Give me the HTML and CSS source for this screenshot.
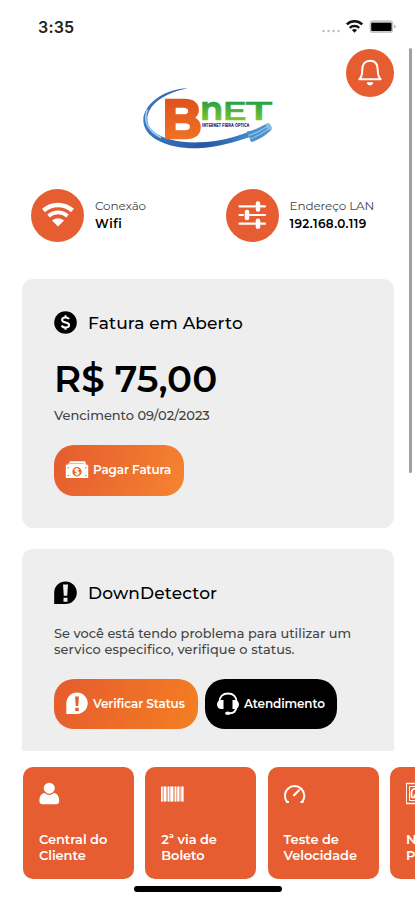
FILE: index.html
```html
<!DOCTYPE html>
<html lang="pt-BR">
<head>
<meta charset="utf-8">
<title>Bnet</title>
<link rel="stylesheet" href="styles.css">
</head>
<body>
<div class="app">
  <header class="status">
    <span class="time">3:35</span>
    <svg class="status-icons" width="76" height="16" viewBox="0 0 76 16">
      <g fill="#bbb"><circle cx="2.500" cy="12" r="1.200"/><circle cx="7.500" cy="12" r="1.200"/><circle cx="12.500" cy="12" r="1.200"/><circle cx="17.500" cy="12" r="1.200"/></g>
      <g fill="none" stroke="#111" stroke-width="2.500"><path d="M25.800 5.400a11.300 11.300 0 0 1 15.400 0"/><path d="M28.800 8.900a7 7 0 0 1 9.400 0"/></g>
      <path d="M33.500 13.800l-2.600-2.700a3.800 3.800 0 0 1 5.200 0z" fill="#111"/>
      <rect x="48.600" y="1.300" width="23.600" height="12.800" rx="3.200" fill="#c8c8c8"/>
      <rect x="50.200" y="3.700" width="20.300" height="8.200" rx="1" fill="#000"/>
      <path d="M73.200 5.500q3 2 0 4z" fill="#aaa"/>
    </svg>
  </header>

  <main class="content">
    <div class="brand">
      <svg class="logo" width="150" height="75" viewBox="0 0 450 225">
        <defs>
          <linearGradient id="orange" x2="0" y2="1"><stop stop-color="#d8481e"/><stop offset="1" stop-color="#f57b22"/></linearGradient>
          <linearGradient id="green" gradientUnits="userSpaceOnUse" x1="0" y1="64" x2="0" y2="122"><stop stop-color="#249f49"/><stop offset="1" stop-color="#80c52c"/></linearGradient>
          <linearGradient id="blue"><stop stop-color="#3a78bf"/><stop offset=".6" stop-color="#2558a6"/><stop offset="1" stop-color="#4387cb"/></linearGradient>
        </defs>
        <path d="M158 25C82 28 25 75 25 121c0 52 70 86 163 84 65-2 112-20 154-33l-3-16c-40 16-89 29-145 31C103 190 37 162 37 118c0-43 52-80 121-93z" fill="url(#blue)"/>
        <path d="M37 88c-13 34 1 66 42 85" fill="none" stroke="#a4c9ed" stroke-width="5"/>
        <path d="M336 154c26-3 43-16 63-24q13 6 10 20c-17 15-37 31-61 36z" fill="#4c8fcb"/>
        <path d="M342 166c25-5 40-20 60-29M346 176c25-7 40-22 59-31" fill="none" stroke="#8dbfe6" stroke-width="4"/>
        <ellipse cx="401" cy="140" rx="7" ry="11" transform="rotate(-25 401 140)" fill="#86bce3"/>
        <text class="logo-b" x="80" y="173" textLength="120" lengthAdjust="spacingAndGlyphs" fill="url(#orange)" stroke="url(#orange)">B</text>
        <text class="logo-n" x="195" y="121" textLength="70" lengthAdjust="spacingAndGlyphs" fill="url(#green)" stroke="url(#green)">n</text>
        <text class="logo-et" x="262" y="121" textLength="74" lengthAdjust="spacingAndGlyphs" fill="url(#green)" stroke="url(#green)">E</text>
        <text class="logo-et" x="332" y="121" textLength="79" lengthAdjust="spacingAndGlyphs" fill="url(#green)" stroke="url(#green)">T</text>
        <text class="logo-tag" x="201" y="140" textLength="142" lengthAdjust="spacingAndGlyphs">INTERNET FIBRA OPTICA</text>
      </svg>
      <div class="bell">
        <svg width="30" height="30" viewBox="0 0 30 30" fill="none" stroke="#fff" stroke-width="2" stroke-linejoin="round" stroke-linecap="round">
          <path d="M4.300 21.200c2.300-2 3-4.600 3-9.600C7.300 6 10 2.800 15 2.800s7.700 3.200 7.700 8.800c0 5 .7 7.600 3 9.600z"/>
          <path d="M12.800 25.200q2.200 2.500 4.400 0z" fill="#fff"/>
        </svg>
      </div>
    </div>

    <section class="network">
      <div class="info">
        <div class="disc">
          <svg width="34" height="26" viewBox="0 0 34 26" fill="none" stroke="#fff">
            <path d="M2.500 8.500a22 22 0 0 1 29 0" stroke-width="4.500"/>
            <path d="M7.500 14a14.500 14.500 0 0 1 19 0" stroke-width="3.700"/>
            <path d="M17 24.500l-6-6q6-4.500 12 0z" fill="#fff" stroke="none"/>
          </svg>
        </div>
        <div class="info-text"><div class="label">Conexão</div><div class="value t-wifi">Wifi</div></div>
      </div>
      <div class="info">
        <div class="disc">
          <svg width="28" height="28" viewBox="0 0 28 28" fill="none" stroke="#fff" stroke-linecap="round">
            <path d="M1.500 5.300H17M23 5.300h4M1.500 14H5M12 14h15M1.500 22.700H17M23 22.700h4" stroke-width="2.200"/>
            <path d="M20 2.500v6M9 11v6M20 19.700v6" stroke-width="4.600"/>
          </svg>
        </div>
        <div class="info-text"><div class="label">Endereço LAN</div><div class="value t-ip">192.168.0.119</div></div>
      </div>
    </section>

    <section class="card invoice">
      <div class="card-title">
        <svg width="24" height="24" viewBox="0 0 24 24"><circle cx="11.500" cy="11.500" r="11.300"/><path d="M15 8.100C14.300 6.800 13.100 6.500 11.500 6.500c-2 0-3.400.8-3.400 2.400 0 3.500 7 1.500 7 5.100 0 1.700-1.500 2.500-3.600 2.500-1.800 0-3.200-.6-3.800-2M11.500 4.200V6.500M11.500 16.500v2.300" fill="none" stroke="#fff" stroke-width="2"/></svg>
        <h2>Fatura em Aberto</h2>
      </div>
      <div class="amount">R$ 75,00</div>
      <div class="due">Vencimento 09/02/2023</div>
      <div class="actions">
        <div class="btn pay">
          <svg width="24" height="18" viewBox="0 0 24 18">
            <path d="M4.500 1.200h15v3M2.800 3.400h18.400" fill="none" stroke="#fff" stroke-width="1.700"/>
            <rect x=".8" y="3.800" width="22.400" height="13.200" fill="#fff"/>
            <circle cx="12" cy="10.800" r="4.700" fill="#eb6a2b"/>
            <path d="M14 8.800q-4-1.500-4 .5c0 1.800 4 .9 4 2.800q0 2-4 .5M12 7v7.600" fill="none" stroke="#fff" stroke-width="1.200"/>
            <path d="M2.500 6.800h1.500M20 6.800h1.500M2.500 14.500h1.500M20 14.500h1.500" stroke="#eb6a2b" stroke-width="1"/>
          </svg>
          <span>Pagar Fatura</span>
        </div>
      </div>
    </section>

    <section class="card detector">
      <div class="card-title">
        <svg width="24" height="24" viewBox="0 0 24 24"><path d="M.2 23V11.500A11.300 11.300 0 1 1 11.500 23z"/><path d="M9 3.500h5l-.8 11.200H9.800zM9.500 16.700h4v4h-4z" fill="#eee"/></svg>
        <h2>DownDetector</h2>
      </div>
      <p class="desc"><span class="d1">Se você está tendo problema para utilizar um</span><br><span class="d2">servico especifico, verifique o status.</span></p>
      <div class="actions">
        <div class="btn check">
          <svg width="24" height="24" viewBox="0 0 24 24"><path d="M1.300 22V11.300A10.700 10.700 0 1 1 12 22z" fill="#fff"/><path d="M10.100 4.500h3.800l-.7 9.500h-2.400zM10.300 15.700h3.400v3.400h-3.400z" fill="#e75b2d"/></svg>
          <span>Verificar Status</span>
        </div>
        <div class="btn support">
          <svg width="24" height="24" viewBox="0 0 24 24" fill="none" stroke="#fff">
            <path d="M3.500 10C3.500 4.500 7 1.500 12 1.500s8.500 3 8.500 8.500M20.500 15.500c-.7 3.500-2.800 5.600-6.500 5.800" stroke-width="1.900"/>
            <path d="M7.500 8v9H5.600C2.700 17 1 15.100 1 12.500s1.700-4.500 4.600-4.500zM16.500 8v9h1.900c2.900 0 4.600-1.900 4.600-4.500s-1.700-4.500-4.600-4.500z" fill="#fff" stroke="none"/>
            <ellipse cx="11.800" cy="21.300" rx="2.700" ry="1.700" fill="#fff" stroke="none"/>
          </svg>
          <span>Atendimento</span>
        </div>
      </div>
    </section>
  </main>

  <nav class="shortcuts">
    <div class="tile">
      <svg width="24" height="24" viewBox="0 0 24 24" fill="#fff"><circle cx="10.300" cy="6.200" r="5.500"/><path d="M5.600 11q4.700 4.100 9.400 0c3.300.4 5.200 3.400 5.200 8 0 2.100-1.200 3.200-3 3.200H3.400c-1.800 0-3-1.100-3-3.200 0-4.600 1.900-7.600 5.200-8z"/></svg>
      <div><span>Central do</span><br><span>Cliente</span></div>
    </div>
    <div class="tile">
      <svg width="24" height="24" viewBox="0 0 24 24" fill="#fff"><rect x="0" y="4.500" width="22.500" height="15" opacity=".5"/><path d="M0 4.500h1.500v15H0zM3 4.500h2v15H3zM7 4.500h1v15H7zM9.500 4.500H12v15H9.500zM14 4.500h1v15h-1zM16.500 4.500H18v15h-1.500zM20.500 4.500h2v15h-2z"/></svg>
      <div><span>2ª via de</span><br><span>Boleto</span></div>
    </div>
    <div class="tile">
      <svg width="24" height="24" viewBox="0 0 24 24" fill="none" stroke="#fff" stroke-width="2"><path d="M3.200 20a9.700 9.700 0 1 1 14.800 0"/><path d="M10 13.200L15 8.200" stroke-width="2.200" stroke-linecap="round"/><path d="M2 20h3M16.500 20h3"/></svg>
      <div><span>Teste de</span><br><span>Velocidade</span></div>
    </div>
    <div class="tile">
      <svg width="24" height="24" viewBox="0 0 24 24" fill="none" stroke="#fff" stroke-width="1.400"><rect x=".2" y="1.500" width="21" height="20"/><path d="M3.500 4.500h15v14h-15z" stroke-width="1"/><path d="M5.500 15.500v-5a4 4 0 0 1 8 0v5M5.500 15.500h3v-3" stroke-width="1.700"/></svg>
      <div><span>N</span><br><span>P</span></div>
    </div>
  </nav>
  <div class="home-bar"></div>
  <div class="scrollbar"></div>
</div>
</body>
</html>
```
FILE: styles.css
```css
* { box-sizing: border-box; }
body { margin: 0; background: #fff; color: #000; font-family: Montserrat, Inter, "Liberation Sans", sans-serif; }
.app { position: relative; width: 415px; height: 900px; overflow: hidden; display: flex; flex-direction: column; }
.status { height: 48px; flex: none; display: flex; justify-content: space-between; align-items: flex-start; padding: 19px 18px 0 38px; }
.time { font-family: Inter, sans-serif; font-size: 16px; line-height: 17px; font-weight: 600; color: #222; letter-spacing: .2px; }
.content { height: 703px; flex: none; overflow: hidden; padding: 0 21px 0 22px; }
.brand { height: 140px; display: flex; justify-content: space-between; align-items: flex-start; padding-left: 113px; }
.logo { margin-top: 32px; }
.logo text { font-family: Montserrat, Inter, sans-serif; font-weight: 700; }
.logo .logo-b { font-size: 165px; stroke-width: 7px; stroke-linejoin: round; }
.logo .logo-n { font-size: 98px; stroke-width: 1px; }
.logo .logo-et { font-size: 79px; font-weight: 600; stroke-width: 1px; }
.logo .logo-tag { font-size: 14px; font-weight: 800; fill: #383b8c; }
.bell { width: 48px; height: 48px; margin-top: .5px; border-radius: 50%; background: #e55d31; display: flex; align-items: center; justify-content: center; }
.network { height: 91px; display: flex; padding-left: 9px; }
.info { width: 194.500px; height: 54px; flex: none; display: flex; align-items: center; gap: 11px; }
.disc { width: 53px; height: 53px; flex: none; border-radius: 50%; background: #e55d31; display: flex; align-items: center; justify-content: center; }
.info-text { padding-bottom: 2px; }
.label, .value { font-size: 12px; line-height: 18px; white-space: nowrap; }
.value { line-height: 17px; font-weight: 600; }
.label { color: #444; letter-spacing: -.12px; }
.t-wifi { letter-spacing: .6px; }
.t-ip { letter-spacing: .38px; }
.card { width: 372px; background: #eee; border-radius: 11px; padding: 32px 32px 0; }
.invoice { height: 249px; margin-bottom: 21px; }
.detector { height: 260px; }
.card-title { display: flex; align-items: center; gap: 10px; height: 24px; }
h2 { margin: -1px 0 0; font-size: 17px; font-weight: 500; line-height: 24px; white-space: nowrap; letter-spacing: .16px; }
.amount { margin-top: 21px; height: 46px; font-size: 37.200px; line-height: 46px; font-weight: 600; white-space: nowrap; }
.due { height: 18px; margin-top: 4px; font-size: 13px; line-height: 18px; font-weight: 500; color: #444; white-space: nowrap; letter-spacing: -.03px; }
.actions { display: flex; gap: 7px; margin-top: 21px; }
.btn { height: 50.500px; border-radius: 20px; display: flex; align-items: center; gap: 4px; padding-left: 11px; color: #fff; font-size: 12px; font-weight: 600; letter-spacing: -.12px; white-space: nowrap; background: linear-gradient(110deg, #e55b2f, #f5842f); }
.btn svg { flex: none; }
.pay { width: 130px; padding-bottom: 1px; }
.check { width: 144px; background: linear-gradient(110deg, #e55b2f, #f47f22); }
.support { width: 132px; background: #000; }
.desc { margin: 21px 0 0; font-size: 12.900px; line-height: 16px; font-weight: 500; color: #444; white-space: nowrap; }
.d1 { letter-spacing: .03px; }
.d2 { letter-spacing: .11px; }
.card-title + .desc + .actions { margin-top: 20.500px; }
.shortcuts { height: 128px; flex: none; display: flex; gap: 11.300px; padding: 16px 0 0 23px; }
.tile { width: 111px; height: 112px; flex: none; border-radius: 10px; background: #e55d31; color: #fff; padding: 15px 0 0 16px; font-size: 13px; line-height: 16px; font-weight: 600; letter-spacing: -.08px; white-space: nowrap; }
.tile svg { display: block; margin-bottom: 25px; }
.home-bar { width: 148px; height: 6px; border-radius: 3px; background: #000; margin: 7px 0 0 134px; }
.scrollbar { position: absolute; left: 409px; top: 48px; width: 3px; height: 425px; border-radius: 2px; background: #a0a0a0; }
```
